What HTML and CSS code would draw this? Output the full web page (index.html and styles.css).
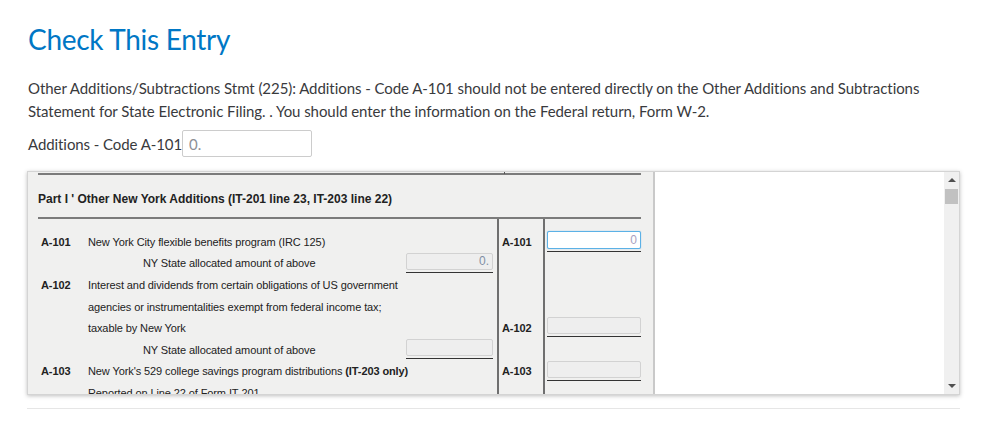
FILE: index.html
```html
<!DOCTYPE html>
<html lang="en">
<head>
    <meta charset="UTF-8">
    <meta name="viewport" content="width=device-width, initial-scale=1.0">
    <title>Check This Entry</title>
    <link rel="stylesheet" href="styles.css">
</head>
<body>
    <div class="container">
        <h1>Check This Entry</h1>

        <p class="message">Other Additions/Subtractions Stmt (225): Additions - Code A-101 should not be entered directly on the Other Additions and Subtractions Statement for State Electronic Filing. . You should enter the information on the Federal return, Form W-2.</p>

        <div class="entry-field">
            <label for="entry-a101">Additions - Code A-101</label>
            <input type="text" id="entry-a101" placeholder="0." autocomplete="off">
        </div>

        <div class="form-frame">
            <div class="form-pane">
                <div class="part-header">Part I ' Other New York Additions (IT-201 line 23, IT-203 line 22)</div>

                <div class="form-body">
                    <div class="row">
                        <span class="code">A-101</span>
                        <span class="desc">New York City flexible benefits program (IRC 125)</span>
                        <span class="amount"></span>
                        <span class="code line-code">A-101</span>
                        <span class="line-amount"><span class="underline"><input type="text" class="box focused" value="0"></span></span>
                    </div>
                    <div class="row">
                        <span class="code"></span>
                        <span class="desc indent">NY State allocated amount of above</span>
                        <span class="amount"><span class="underline"><input type="text" class="box" value="0."></span></span>
                        <span class="code line-code"></span>
                        <span class="line-amount"></span>
                    </div>
                    <div class="row">
                        <span class="code">A-102</span>
                        <span class="desc">Interest and dividends from certain obligations of US government</span>
                        <span class="amount"></span>
                        <span class="code line-code"></span>
                        <span class="line-amount"></span>
                    </div>
                    <div class="row">
                        <span class="code"></span>
                        <span class="desc">agencies or instrumentalities exempt from federal income tax;</span>
                        <span class="amount"></span>
                        <span class="code line-code"></span>
                        <span class="line-amount"></span>
                    </div>
                    <div class="row">
                        <span class="code"></span>
                        <span class="desc">taxable by New York</span>
                        <span class="amount"></span>
                        <span class="code line-code">A-102</span>
                        <span class="line-amount"><span class="underline"><input type="text" class="box"></span></span>
                    </div>
                    <div class="row">
                        <span class="code"></span>
                        <span class="desc indent">NY State allocated amount of above</span>
                        <span class="amount"><span class="underline"><input type="text" class="box"></span></span>
                        <span class="code line-code"></span>
                        <span class="line-amount"></span>
                    </div>
                    <div class="row">
                        <span class="code">A-103</span>
                        <span class="desc">New York's 529 college savings program distributions <b>(IT-203 only)</b></span>
                        <span class="amount"></span>
                        <span class="code line-code">A-103</span>
                        <span class="line-amount"><span class="underline"><input type="text" class="box"></span></span>
                    </div>
                    <div class="row">
                        <span class="code"></span>
                        <span class="desc">Reported on Line 22 of Form IT-201</span>
                        <span class="amount"></span>
                        <span class="code line-code"></span>
                        <span class="line-amount"></span>
                    </div>
                </div>
            </div>
            <div class="blank-pane"></div>
            <div class="scrollbar">
                <span class="arrow up"></span>
                <span class="thumb"></span>
                <span class="track"></span>
                <span class="arrow down"></span>
            </div>
        </div>

        <hr class="bottom-rule">
    </div>
</body>
</html>
```

FILE: styles.css
```css
* {
    margin: 0;
    padding: 0;
    box-sizing: border-box;
}

body {
    font-family: Lato, "Open Sans", sans-serif;
    background-color: #fff;
    color: #393a3d;
}

.container {
    width: 933px;
    margin-left: 27px;
    padding-top: 21px;
}

h1 {
    font-size: 28px;
    font-weight: 400;
    line-height: 36px;
    letter-spacing: -0.3px;
    color: #0077c5;
    padding-left: 1px;
}

.message {
    margin-top: 20px;
    font-size: 15px;
    line-height: 23px;
    letter-spacing: -0.06px;
    padding-left: 1px;
}

.entry-field {
    display: flex;
    align-items: center;
    margin-top: 7px;
    font-size: 15px;
    letter-spacing: -0.08px;
    padding-left: 1px;
}

.entry-field input {
    width: 130px;
    height: 27px;
    padding: 0 6px;
    border: 1px solid #ccc;
    border-radius: 2px;
    font-family: Lato, sans-serif;
    font-size: 15px;
}

.entry-field input::placeholder {
    color: #8d9096;
}

/* embedded state form */
.form-frame {
    display: flex;
    height: 224px;
    margin-top: 14px;
    border: 1px solid #d4d4d4;
    box-shadow: 0 1px 4px rgba(0, 0, 0, 0.25);
    overflow: hidden;
}

.form-pane {
    width: 627px;
    flex-shrink: 0;
    background-color: #f0f0ef;
    border-right: 2px solid #c9c9c9;
    padding-left: 10px;
    font-family: "Liberation Sans", Arial, sans-serif;
    font-size: 11px;
    letter-spacing: -0.1px;
    color: #222;
}

.part-header {
    position: relative;
    width: 603px;
    height: 46px;
    margin-top: 1px;
    padding-top: 17px;
    border-top: 2px solid #7b7b7b;
    border-bottom: 2px solid #7b7b7b;
    font-size: 12px;
    letter-spacing: 0;
    font-weight: bold;
}

.part-header::before {
    content: "";
    position: absolute;
    left: 466px;
    top: -4px;
    width: 1px;
    height: 3px;
    background-color: #555;
}

.form-body {
    width: 603px;
    padding-top: 12px;
    background:
        linear-gradient(#6f6f6f, #6f6f6f) 459px 0 / 2px 100% no-repeat,
        linear-gradient(#6f6f6f, #6f6f6f) 505px 0 / 2px 100% no-repeat;
}

.row {
    display: grid;
    grid-template-columns: 50px 318px 91px 46px 98px;
    height: 21.6px;
    align-items: center;
    white-space: nowrap;
}

.code {
    font-weight: bold;
    padding-left: 3px;
}

.line-code {
    padding-left: 5px;
}

.desc.indent {
    padding-left: 55px;
}

.amount {
    align-self: start;
}

.line-amount {
    align-self: start;
    padding-left: 4px;
}

.underline {
    display: inline-block;
    padding-bottom: 2px;
    border-bottom: 1px solid #333;
}

.box {
    display: block;
    height: 17px;
    padding: 0 3px;
    border: 1px solid #d2d2d2;
    border-radius: 2px;
    background-color: #eeeeee;
    font-family: "Liberation Sans", Arial, sans-serif;
    font-size: 12px;
    color: #7f8ea4;
    text-align: right;
}

.amount .box {
    width: 87px;
}

.line-amount .box {
    width: 94px;
}

.box.focused {
    height: 18px;
    background-color: #fff;
    border-color: #5cb1e6;
    box-shadow: 0 0 1px #5cb1e6;
    color: #a9a0c0;
}

.blank-pane {
    flex: 1;
    background-color: #fff;
}

.scrollbar {
    width: 15px;
    display: flex;
    flex-direction: column;
    align-items: center;
    background-color: #f0f0f0;
}

.arrow {
    width: 0;
    height: 0;
    border-left: 4px solid transparent;
    border-right: 4px solid transparent;
}

.arrow.up {
    margin-top: 6px;
    border-bottom: 4px solid #505050;
}

.arrow.down {
    margin-bottom: 6px;
    border-top: 4px solid #505050;
}

.thumb {
    width: 13px;
    height: 15px;
    margin-top: 7px;
    background-color: #c1c1c1;
}

.track {
    flex: 1;
}

.bottom-rule {
    margin-top: 13px;
    border: none;
    border-top: 1px solid #e6e6e6;
}
```
